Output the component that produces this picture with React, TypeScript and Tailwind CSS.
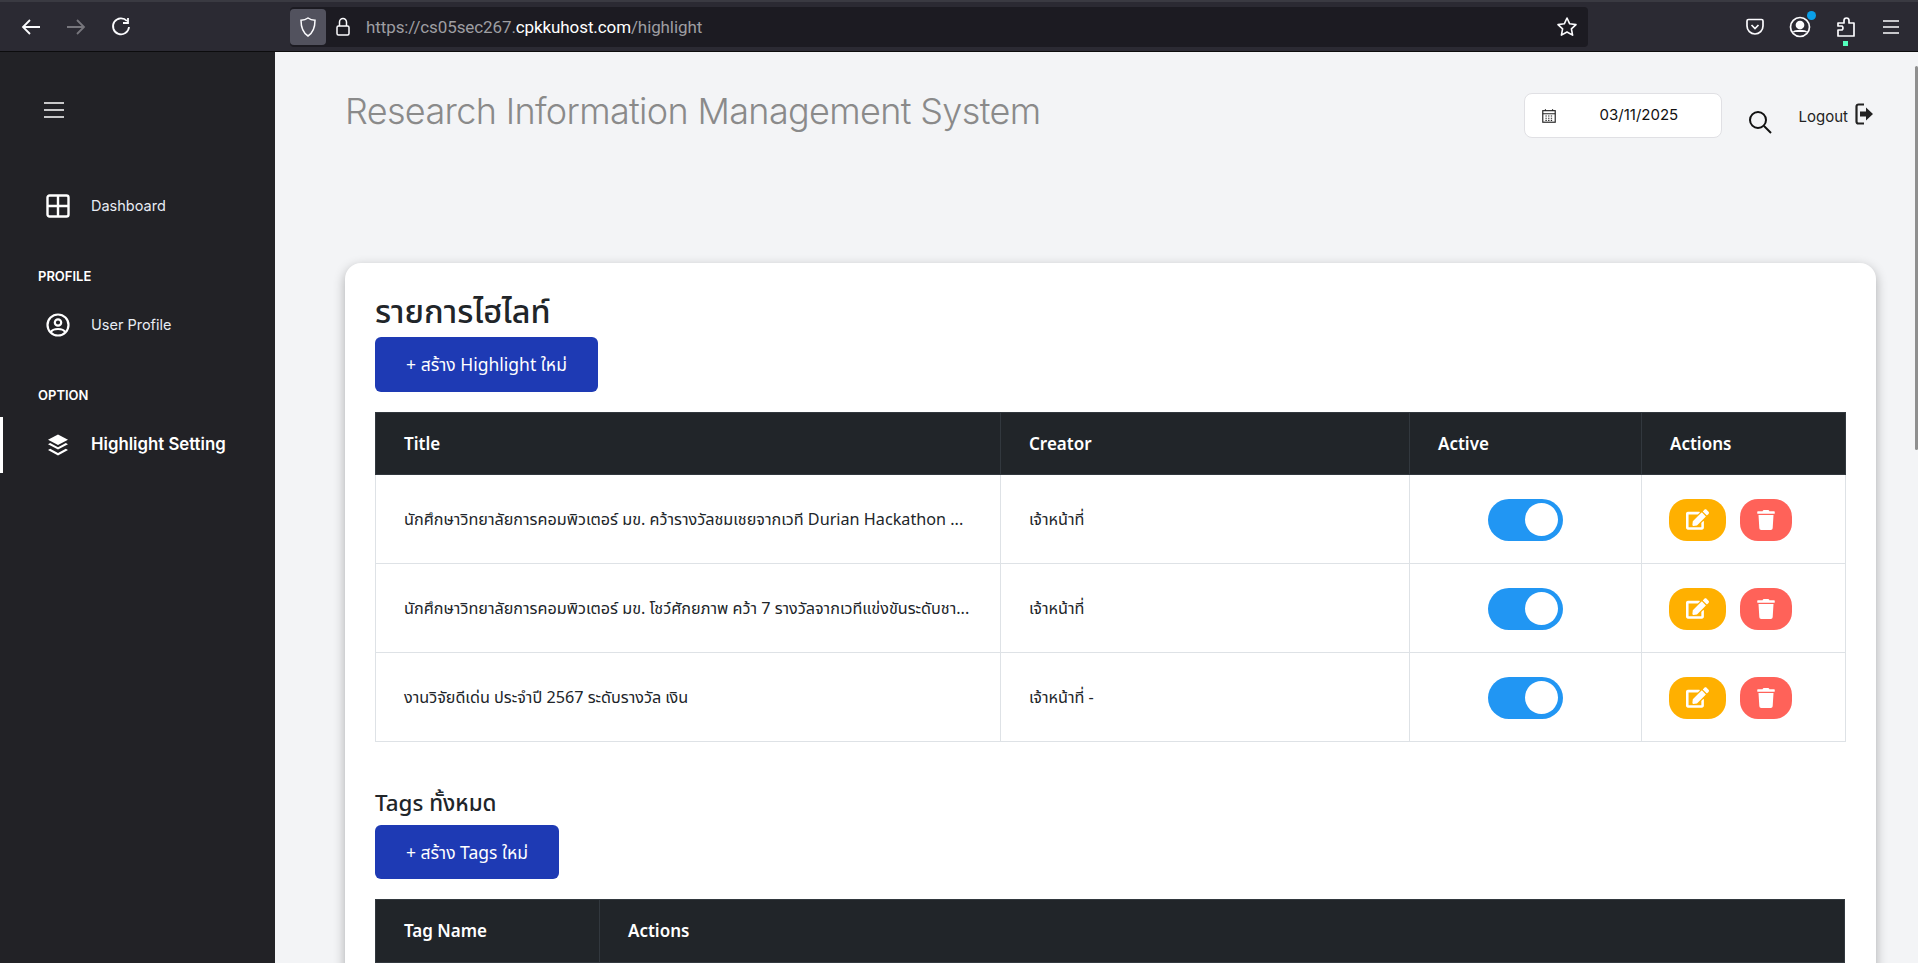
import { FaEdit, FaTrash } from "react-icons/fa";

const rows = [
  { title: "นักศึกษาวิทยาลัยการคอมพิวเตอร์ มข. คว้ารางวัลชมเชยจากเวที Durian Hackathon ...", creator: "เจ้าหน้าที่" },
  { title: "นักศึกษาวิทยาลัยการคอมพิวเตอร์ มข. โชว์ศักยภาพ คว้า 7 รางวัลจากเวทีแข่งขันระดับชา...", creator: "เจ้าหน้าที่" },
  { title: "งานวิจัยดีเด่น ประจำปี 2567 ระดับรางวัล เงิน", creator: "เจ้าหน้าที่ -" },
];

function BrowserBar() {
  return (
    <div className="flex h-[52px] shrink-0 items-center border-t-2 border-b border-t-[#3a3a42] border-b-[#0c0c0d] bg-[#2b2a33] font-['Roboto',sans-serif] text-white">
      <div className="flex w-[290px] items-center gap-[23px] pl-[20px]">
        <svg width="22" height="22" viewBox="0 0 22 22" fill="none" stroke="#fbfbfe" strokeWidth="1.8"><path d="M20 11H3M10 4l-7 7 7 7" /></svg>
        <svg width="22" height="22" viewBox="0 0 22 22" fill="none" stroke="#77767d" strokeWidth="1.8"><path d="M2 11h17M12 4l7 7-7 7" /></svg>
        <svg width="22" height="22" viewBox="0 0 22 22" fill="none" stroke="#fbfbfe" strokeWidth="1.8"><path d="M17 5a8 8 0 1 0 2 6" /><path d="M18 2v5h-5" /></svg>
      </div>
      <div className="flex h-[40px] w-[1298px] items-center rounded-[4px] bg-[#1c1b22]">
        <div className="flex h-[36px] w-[36px] items-center justify-center rounded-[4px] bg-[#52525e]">
          <svg width="20" height="22" viewBox="0 0 20 22" fill="none" stroke="#fbfbfe" strokeWidth="1.5"><path d="M10 2c2 1.500 4.500 2.200 7 2.300 0 6.500-1 12-7 15.700C4 16.300 3 10.800 3 4.300 5.500 4.200 8 3.500 10 2z" /></svg>
        </div>
        <svg className="ml-[8px]" width="18" height="22" viewBox="0 0 18 22" fill="none" stroke="#fbfbfe" strokeWidth="1.5"><rect x="3" y="10" width="12" height="9" rx="1.500" /><path d="M5.500 10V6a3.500 3.500 0 0 1 7 0v4" /></svg>
        <div className="ml-[14px] pt-[2px] text-[17px] tracking-[-0.1px] text-[#9e9ea2]">
          https://cs05sec267.<span className="text-white">cpkkuhost.com</span>/highlight
        </div>
        <svg className="ml-auto mr-[9px]" width="24" height="24" viewBox="0 0 24 24" fill="none" stroke="#fbfbfe" strokeWidth="1.6" strokeLinejoin="round"><path d="M12 3l2.700 5.800 6.300.8-4.600 4.300 1.200 6.200L12 17l-5.600 3.100 1.200-6.200L3 9.600l6.300-.8z" /></svg>
      </div>
      <div className="ml-auto flex items-center gap-[24px] pr-[17px]">
        <svg width="20" height="20" viewBox="0 0 20 20" fill="none" stroke="#fbfbfe" strokeWidth="1.700"><path d="M3.500 2.500h13A1.500 1.500 0 0 1 18 4v5a8 8 0 0 1-16 0V4a1.500 1.500 0 0 1 1.500-1.500z" /><path d="M6.500 8l3.500 3.500L13.500 8" /></svg>
        <div className="relative">
          <svg width="22" height="22" viewBox="0 0 22 22" fill="none" stroke="#fbfbfe" strokeWidth="1.700"><circle cx="11" cy="11" r="9.500" /><circle cx="11" cy="9" r="3.500" fill="#fbfbfe" /><path d="M4.500 16c2-2 11-2 13 0" fill="#fbfbfe" /></svg>
          <span className="absolute right-[-5px] top-[-5px] h-[9px] w-[9px] rounded-full bg-[#0a9fe8]" />
        </div>
        <div className="relative">
          <svg width="22" height="24" viewBox="0 0 22 24" fill="none" stroke="#fbfbfe" strokeWidth="1.700" strokeLinejoin="round"><path d="M9 5.500a2.500 2.500 0 0 1 5 0V8h5v13H3v-6h4a2.500 2.500 0 0 0 0-4H3V8h6z" /></svg>
          <span className="absolute bottom-[-7px] left-[8px] h-[5px] w-[5px] bg-[#54ffbd]" />
        </div>
        <svg width="20" height="20" viewBox="0 0 20 20" fill="none" stroke="#fbfbfe" strokeWidth="1.700"><path d="M2 4h16M2 10h16M2 16h16" /></svg>
      </div>
    </div>
  );
}

function Sidebar() {
  return (
    <aside className="flex w-[275px] shrink-0 flex-col bg-[#222226] font-['Inter',sans-serif] text-white">
      <div className="pl-[44px] pt-[50px]">
        <svg width="20" height="16" viewBox="0 0 20 16" fill="none" stroke="#ffffff" strokeWidth="1.700"><path d="M0 1h20M0 8h20M0 15h20" /></svg>
      </div>
      <div className="mt-[68px] flex h-[40px] items-center pl-[46px] text-[14.5px] text-[#e8ecf4]">
        <svg width="24" height="24" viewBox="0 0 24 24" fill="none" stroke="#ffffff" strokeWidth="2.400"><rect x="1.500" y="1.500" width="21" height="21" rx="2" /><path d="M12 1.500v21M1.500 12h21" /></svg>
        <span className="ml-[21px]">Dashboard</span>
      </div>
      <div className="mt-[42px] pl-[38px] text-[13px] font-semibold leading-[16px]">PROFILE</div>
      <div className="mt-[21px] flex h-[40px] items-center pl-[46px] text-[14.5px] text-[#e8ecf4]">
        <svg width="24" height="24" viewBox="0 0 24 24" fill="none" stroke="#ffffff" strokeWidth="2.200"><circle cx="12" cy="12" r="10.500" /><circle cx="12" cy="9.500" r="3.200" /><path d="M5 19c2-4 12-4 14 0" /></svg>
        <span className="ml-[21px]">User Profile</span>
      </div>
      <div className="mt-[42px] pl-[38px] text-[13px] font-semibold leading-[16px]">OPTION</div>
      <div className="mt-[14px] flex h-[56px] items-center border-l-[3px] border-white pl-[43px] text-[16.8px] font-semibold">
        <svg width="24" height="24" viewBox="0 0 24 24" fill="#ffffff"><path d="M12 1.500l10 5.300-10 5.300-10-5.300z" /><path d="M2 11.300l2.200-1.200L12 14.300l7.800-4.200 2.200 1.200-10 5.300z" /><path d="M2 16.900l2.200-1.200 7.800 4.200 7.800-4.200 2.200 1.200-10 5.600z" /></svg>
        <span className="ml-[21px]">Highlight Setting</span>
      </div>
    </aside>
  );
}

function ActionButtons() {
  return (
    <div className="flex gap-[14px]">
      <button className="flex h-[42px] w-[57px] items-center justify-center rounded-[18px] bg-[#ffb000] text-white">
        <FaEdit className="h-[23px] w-[23px]" />
      </button>
      <button className="flex h-[42px] w-[52px] items-center justify-center rounded-[18px] bg-[#ff6259] text-white">
        <FaTrash className="h-[20px] w-[18px]" />
      </button>
    </div>
  );
}

export default function App() {
  return (
    <div className="flex h-screen flex-col overflow-hidden">
      <BrowserBar />
      <div className="relative flex min-h-0 flex-1">
        <Sidebar />
        <main className="min-w-0 flex-1 bg-[#f3f4f6] pl-[70px] pr-[42px]">
          <div className="flex h-[211px] items-start justify-between font-['Inter',sans-serif]">
            <h1 className="mt-[35px] text-[36px] font-light leading-[48px] tracking-[-0.66px] text-[#8a8a8a]">Research Information Management System</h1>
            <div className="mr-[2px] flex items-start">
              <div className="mt-[41px] flex h-[45px] w-[198px] items-center rounded-[8px] border border-[#e0e0e4] bg-white pl-[16px] text-[15px] text-[#111]">
                <svg width="16" height="16" viewBox="0 0 18 18" fill="none" stroke="#222" strokeWidth="1.300"><rect x="2" y="3" width="14" height="13" /><path d="M2 6.500h14M5 1.500v2M13 1.500v2" /><path d="M5 9h8M5 11.500h8M5 14h8" strokeDasharray="1.500 1.500" /></svg>
                <span className="ml-[43px]">03/11/2025</span>
              </div>
              <svg className="ml-[26px] mt-[58px]" width="24" height="24" viewBox="0 0 24 24" fill="none" stroke="#111" strokeWidth="2"><circle cx="10" cy="10" r="8" /><path d="M16 16l7 7" /></svg>
              <span className="ml-[27px] mt-[54px] text-[15px] leading-[22px] text-[#222]">Logout</span>
              <svg className="ml-[6px] mt-[51px]" width="20" height="22" viewBox="0 0 20 22" fill="none"><path d="M10 1.500H4.500a2 2 0 0 0-2 2v15a2 2 0 0 0 2 2H10" stroke="#222" strokeWidth="2.200" /><path d="M6 8.500h6V4.500l7 6.500-7 6.500v-4H6z" fill="#222" /></svg>
            </div>
          </div>
          <section className="rounded-[16px] bg-white pb-[30px] pl-[30px] pr-[31px] pt-[20px] shadow-[0_4px_12px_rgba(0,0,0,0.3)] font-['Noto_Sans','Noto_Sans_Thai',sans-serif] text-[#212529]">
            <h2 className="text-[32.4px] font-medium leading-[54px]">รายการไฮไลท์</h2>
            <button className="block h-[55px] w-[223px] rounded-[6px] bg-[#1e3ab4] text-[17.5px] text-white">+ สร้าง Highlight ใหม่</button>
            <table className="mt-[20px] w-full table-fixed border-collapse text-[16.2px]">
              <colgroup>
                <col className="w-[625px]" />
                <col className="w-[409px]" />
                <col className="w-[232px]" />
                <col className="w-[204px]" />
              </colgroup>
              <thead className="bg-[#212529] text-[17px] text-white">
                <tr className="h-[62px]">
                  <th className="border border-[#32383e] pl-[28px] text-left font-semibold">Title</th>
                  <th className="border border-[#32383e] pl-[28px] text-left font-semibold">Creator</th>
                  <th className="border border-[#32383e] pl-[28px] text-left font-semibold">Active</th>
                  <th className="border border-[#32383e] pl-[28px] text-left font-semibold">Actions</th>
                </tr>
              </thead>
              <tbody>
                {rows.map((r) => (
                  <tr key={r.title} className="h-[89px]">
                    <td className="overflow-hidden whitespace-nowrap border border-[#dee2e6] pl-[28px]">{r.title}</td>
                    <td className="border border-[#dee2e6] pl-[28px]">{r.creator}</td>
                    <td className="border border-[#dee2e6] pt-[1px]">
                      <div className="ml-[78px] flex h-[42px] w-[75px] items-center justify-end rounded-full bg-[#2196f3] pr-[5px]">
                        <span className="h-[33px] w-[33px] rounded-full bg-white" />
                      </div>
                    </td>
                    <td className="border border-[#dee2e6] pl-[27px] pt-[1px]"><ActionButtons /></td>
                  </tr>
                ))}
              </tbody>
            </table>
            <h3 className="mt-[43px] text-[22.4px] font-medium leading-[36px]">Tags ทั้งหมด</h3>
            <button className="mt-[4px] block h-[54px] w-[184px] rounded-[6px] bg-[#1e3ab4] text-[17.5px] text-white">+ สร้าง Tags ใหม่</button>
            <table className="mt-[20px] w-full table-fixed border-collapse text-[17px]">
              <colgroup>
                <col className="w-[224px]" />
                <col />
              </colgroup>
              <thead className="bg-[#212529] text-white">
                <tr className="h-[63px]">
                  <th className="border border-[#32383e] pl-[28px] text-left font-semibold">Tag Name</th>
                  <th className="border border-[#32383e] pl-[28px] text-left font-semibold">Actions</th>
                </tr>
              </thead>
            </table>
          </section>
        </main>
        <div className="absolute right-0 top-[14px] h-[384px] w-[3px] rounded-full bg-[#8f8f8f]" />
      </div>
    </div>
  );
}
